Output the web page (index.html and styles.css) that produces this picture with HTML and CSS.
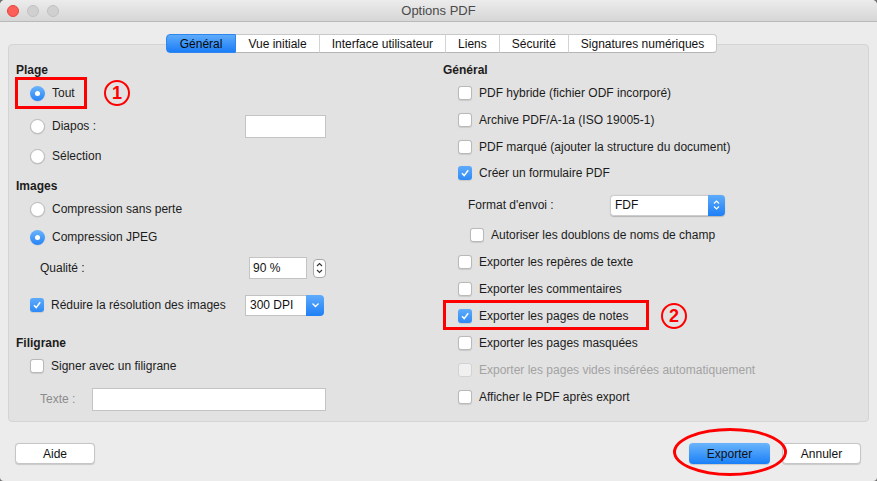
FILE: index.html
```html
<!DOCTYPE html>
<html lang="fr">
<head>
<meta charset="utf-8">
<title>Options PDF</title>
<link rel="stylesheet" href="styles.css">
</head>
<body>
<div class="window">
  <div class="titlebar">
    <div class="lights">
      <span class="light red"></span>
      <span class="light"></span>
      <span class="light"></span>
    </div>
    <div class="title">Options PDF</div>
    <div></div>
  </div>

  <div class="tabs">
    <span class="tab active">Général</span>
    <span class="tab">Vue initiale</span>
    <span class="tab">Interface utilisateur</span>
    <span class="tab">Liens</span>
    <span class="tab">Sécurité</span>
    <span class="tab">Signatures numériques</span>
  </div>

  <div class="panel">
    <div class="col">
      <div class="row head">Plage</div>
      <div class="row g3 ind"><span class="radio on"></span><span class="lbl">Tout</span></div>
      <div class="row g13 ind"><span class="radio"></span><span class="lbl">Diapos :</span><span class="field diapos"></span></div>
      <div class="row g10 ind"><span class="radio"></span><span class="lbl">Sélection</span></div>
      <div class="row g10 head">Images</div>
      <div class="row g3 ind"><span class="radio"></span><span class="lbl">Compression sans perte</span></div>
      <div class="row g8 ind"><span class="radio on"></span><span class="lbl">Compression JPEG</span></div>
      <div class="row g11 sub"><span>Qualité :</span><span class="field quality">90 %</span><span class="spin"><svg width="7" height="12" viewBox="0 0 7 12"><polyline points="1,4 3.5,1.5 6,4" fill="none" stroke="#333" stroke-width="1.1"/><polyline points="1,8 3.5,10.5 6,8" fill="none" stroke="#333" stroke-width="1.1"/></svg></span></div>
      <div class="row g17 ind"><span class="check on"><svg width="10" height="10" viewBox="0 0 10 10"><polyline points="2,5.2 4.2,7.6 8.2,2.2" fill="none" stroke="#fff" stroke-width="1.5"/></svg></span><span class="lbl">Réduire la résolution des images</span><span class="select dpi"><span class="sval">300 DPI</span><span class="sarrow"><svg width="9" height="6" viewBox="0 0 9 6"><polyline points="1.5,1.5 4.5,4.5 7.5,1.5" fill="none" stroke="#fff" stroke-width="1.3"/></svg></span></span></div>
      <div class="row g18 head">Filigrane</div>
      <div class="row g3 ind"><span class="check"></span><span class="lbl">Signer avec un filigrane</span></div>
      <div class="row g13 sub"><span class="muted">Texte :</span><span class="field texte"></span></div>
    </div>

    <div class="col">
      <div class="row head">Général</div>
      <div class="row g3 rind"><span class="check"></span><span class="lbl">PDF hybride (fichier ODF incorporé)</span></div>
      <div class="row g7 rind"><span class="check"></span><span class="lbl">Archive PDF/A-1a (ISO 19005-1)</span></div>
      <div class="row g7 rind"><span class="check"></span><span class="lbl">PDF marqué (ajouter la structure du document)</span></div>
      <div class="row g6 rind"><span class="check on"><svg width="10" height="10" viewBox="0 0 10 10"><polyline points="2,5.2 4.2,7.6 8.2,2.2" fill="none" stroke="#fff" stroke-width="1.5"/></svg></span><span class="lbl">Créer un formulaire PDF</span></div>
      <div class="row g12 fmt"><span class="fmtlbl">Format d'envoi :</span><span class="select fdf"><span class="sval">FDF</span><span class="sarrow"><svg width="7" height="12" viewBox="0 0 7 12"><polyline points="1,4.5 3.5,2 6,4.5" fill="none" stroke="#fff" stroke-width="1.2"/><polyline points="1,7.5 3.5,10 6,7.5" fill="none" stroke="#fff" stroke-width="1.2"/></svg></span></span></div>
      <div class="row g10 rind2"><span class="check"></span><span class="lbl">Autoriser les doublons de noms de champ</span></div>
      <div class="row g7 rind"><span class="check"></span><span class="lbl">Exporter les repères de texte</span></div>
      <div class="row g7 rind"><span class="check"></span><span class="lbl">Exporter les commentaires</span></div>
      <div class="row g7 rind"><span class="check on"><svg width="10" height="10" viewBox="0 0 10 10"><polyline points="2,5.2 4.2,7.6 8.2,2.2" fill="none" stroke="#fff" stroke-width="1.5"/></svg></span><span class="lbl">Exporter les pages de notes</span></div>
      <div class="row g7 rind"><span class="check"></span><span class="lbl">Exporter les pages masquées</span></div>
      <div class="row g7 rind"><span class="check off"></span><span class="lbl muted2">Exporter les pages vides insérées automatiquement</span></div>
      <div class="row g7 rind"><span class="check"></span><span class="lbl">Afficher le PDF après export</span></div>
    </div>
  </div>

  <div class="buttons">
    <span class="btn aide">Aide</span>
    <span class="spacer"></span>
    <span class="btn primary">Exporter</span>
    <span class="btn annuler">Annuler</span>
  </div>

  <div class="mark box1"></div>
  <div class="mark num n1">1</div>
  <div class="mark box2"></div>
  <div class="mark num n2">2</div>
  <div class="mark ellipse"></div>
</div>
</body>
</html>
```

FILE: styles.css
```css
html {
  background: #6f6f6f;
}
body {
  margin: 0;
  width: 877px;
  height: 481px;
  overflow: hidden;
  font-family: "Liberation Sans", Arial, sans-serif;
  font-size: 12px;
  color: #1c1c1c;
}
.window {
  position: relative;
  width: 877px;
  height: 481px;
  background: #ececec;
  border-radius: 5px 5px 4px 4px;
  overflow: hidden;
  display: flex;
  flex-direction: column;
}
.titlebar {
  height: 22px;
  box-sizing: border-box;
  border-bottom: 1px solid #b9b9b9;
  background: linear-gradient(#ececec, #d6d6d6);
  display: grid;
  grid-template-columns: 1fr auto 1fr;
  align-items: center;
}
.lights {
  display: flex;
  gap: 8px;
  padding-left: 7px;
}
.light {
  width: 12px;
  height: 12px;
  box-sizing: border-box;
  border-radius: 50%;
  background: #d0d0d0;
  border: 1px solid #c0c0c0;
}
.light.red {
  background: #fc5f57;
  border-color: #e2463f;
}
.title {
  font-size: 13px;
  color: #4a4a4a;
}
.tabs {
  margin-top: 12px;
  margin-bottom: -9px;
  height: 19px;
  display: flex;
  justify-content: center;
  padding-left: 6px;
  position: relative;
  z-index: 1;
}
.tab {
  height: 19px;
  box-sizing: border-box;
  padding: 0 12px;
  display: flex;
  align-items: center;
  background: #fff;
  border-top: 1px solid #c8c8c8;
  border-bottom: 1px solid #b5b5b5;
  border-right: 1px solid #d3d3d3;
  color: #111;
}
.tab:first-child {
  border-radius: 4px 0 0 4px;
  border-left: 1px solid #c8c8c8;
}
.tab:last-child {
  border-radius: 0 4px 4px 0;
  border-right: 1px solid #c8c8c8;
}
.tab.active {
  background: linear-gradient(#5eabfb, #1b7df6);
  border-color: #2f86ee;
  color: #0a0a0a;
  padding: 0 13px;
}
.panel {
  margin: 0 8px;
  height: 378px;
  box-sizing: border-box;
  background: #e2e2e2;
  border: 1px solid #d4d4d4;
  border-radius: 4px;
  padding: 15px 0 0 7px;
  display: grid;
  grid-template-columns: 310px 1fr;
  column-gap: 117px;
  align-items: start;
}
.col {
  display: flex;
  flex-direction: column;
}
.row {
  height: 20px;
  display: flex;
  align-items: center;
  white-space: nowrap;
}
.head { font-weight: bold; }
.ind { padding-left: 14px; }
.sub { padding-left: 24px; }
.rind { padding-left: 15px; }
.rind2 { padding-left: 27px; }
.fmt { padding-left: 25px; }
.g3 { margin-top: 3px; }
.g6 { margin-top: 6px; }
.g7 { margin-top: 7px; }
.g8 { margin-top: 8px; }
.g10 { margin-top: 10px; }
.g11 { margin-top: 11px; }
.g12 { margin-top: 12px; }
.g13 { margin-top: 13px; }
.g17 { margin-top: 17px; }
.g18 { margin-top: 18px; }
.lbl { margin-left: 7px; }
.muted { color: #8c8c8c; }
.muted2 { color: #a3a3a3; }

.radio {
  width: 15px;
  height: 15px;
  box-sizing: border-box;
  border-radius: 50%;
  background: #fff;
  border: 1px solid #b8b8b8;
  box-shadow: 0 0.5px 1px rgba(0,0,0,0.12);
  flex: none;
  display: flex;
  align-items: center;
  justify-content: center;
}
.radio.on {
  border: none;
  background: linear-gradient(#6cb4fc, #2584f6);
}
.radio.on::after {
  content: "";
  width: 5px;
  height: 5px;
  border-radius: 50%;
  background: #fff;
}
.check {
  width: 14px;
  height: 14px;
  box-sizing: border-box;
  border-radius: 3px;
  background: #fff;
  border: 1px solid #b9b9b9;
  box-shadow: 0 0.5px 1px rgba(0,0,0,0.1);
  flex: none;
  display: flex;
  align-items: center;
  justify-content: center;
}
.check.on {
  border: none;
  background: linear-gradient(#5eabfb, #2f8af6);
}
.check.off {
  background: #f0f0f0;
  border-color: #d2d2d2;
  box-shadow: none;
}
.field {
  box-sizing: border-box;
  background: #fff;
  border: 1px solid #c4c4c4;
  flex: none;
  display: flex;
  align-items: center;
  padding-left: 3px;
}
.diapos {
  width: 81px;
  height: 23px;
  margin-left: auto;
}
.quality {
  width: 58px;
  height: 22px;
  margin-left: auto;
  color: #111;
}
.texte {
  width: 234px;
  height: 23px;
  margin-left: auto;
}
.spin {
  width: 13px;
  height: 19px;
  box-sizing: border-box;
  margin-left: 6px;
  border: 1px solid #a9a9a9;
  border-radius: 4px;
  background: #fff;
  display: flex;
  align-items: center;
  justify-content: center;
  flex: none;
}
.select {
  display: flex;
  box-sizing: border-box;
  height: 21px;
  flex: none;
  overflow: hidden;
}
.sval {
  flex: 1;
  display: flex;
  align-items: center;
  padding-left: 4px;
  background: #fff;
  border: 1px solid #c2c2c2;
  border-right: none;
  color: #111;
}
.sarrow {
  background: linear-gradient(#5eabfb, #1e7ff6);
  display: flex;
  align-items: center;
  justify-content: center;
}
.dpi {
  width: 79px;
  margin-left: auto;
  margin-right: 2px;
  border-radius: 0 4px 4px 0;
}
.dpi .sarrow { width: 18px; }
.fdf {
  width: 115px;
  border-radius: 4px;
  box-shadow: 0 0.5px 1px rgba(0,0,0,0.2);
}
.fdf .sval {
  border-radius: 4px 0 0 4px;
  border-color: #cdcdcd;
}
.fdf .sarrow { width: 17px; }
.fmtlbl { width: 142px; }

.buttons {
  margin-top: 21px;
  display: flex;
  padding: 0 15px;
  height: 21px;
}
.spacer { flex: 1; }
.btn {
  height: 21px;
  box-sizing: border-box;
  display: flex;
  align-items: center;
  justify-content: center;
  background: #fff;
  border: 1px solid #c6c6c6;
  border-radius: 4px;
  box-shadow: 0 0.5px 1px rgba(0,0,0,0.15);
  color: #111;
}
.aide { width: 80px; }
.primary {
  width: 81px;
  border: none;
  background: linear-gradient(#6ab4fb, #1a80f8);
  color: #111;
}
.annuler {
  width: 79px;
  margin-left: 12px;
  margin-right: 1px;
}

.mark {
  position: absolute;
  box-sizing: border-box;
  pointer-events: none;
}
.box1 {
  left: 15px;
  top: 77px;
  width: 72px;
  height: 32px;
  border: 3px solid #f00;
}
.box2 {
  left: 443px;
  top: 300px;
  width: 206px;
  height: 30px;
  border: 3px solid #f00;
}
.num {
  width: 26px;
  height: 26px;
  border: 2.5px solid #f00;
  border-radius: 50%;
  color: #f00;
  font-weight: bold;
  font-size: 18px;
  display: flex;
  align-items: center;
  justify-content: center;
  line-height: 1;
}
.n1 { left: 104px; top: 80px; }
.n2 { left: 661px; top: 303px; }
.ellipse {
  left: 673px;
  top: 428px;
  width: 114px;
  height: 48px;
  border: 3px solid #f00;
  border-radius: 50%;
}
```
